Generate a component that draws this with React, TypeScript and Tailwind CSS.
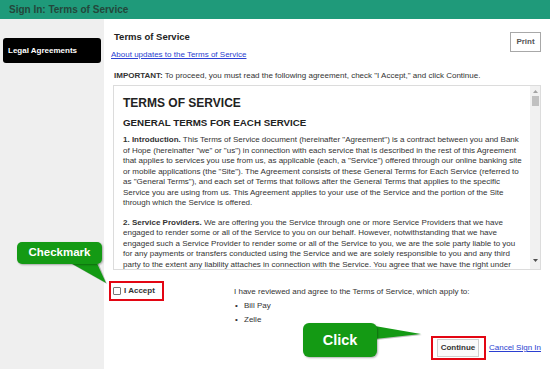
import React from "react";

export default function App() {
  return (
    <div className="relative w-[550px] h-[369px] overflow-hidden bg-white flex flex-col font-['Liberation_Sans',Arial,sans-serif] text-[#333]">
      {/* Header */}
      <div className="h-[19px] shrink-0 bg-[#1f9a7a] flex items-center pl-[9px]">
        <span className="text-[10px] font-bold text-[#23473b] leading-none">Sign In: Terms of Service</span>
      </div>

      <div className="flex flex-1">
        {/* Sidebar */}
        <aside className="w-[104px] shrink-0 bg-[#efefef] pt-[19px] pl-[3px]">
          <div className="w-[98px] h-[25px] bg-black rounded-[3px] flex items-center pl-[5px]">
            <span className="text-white text-[8px] font-bold">Legal Agreements</span>
          </div>
        </aside>

        {/* Main */}
        <main className="flex-1 flex flex-col pl-[5px] pr-[9px] pt-[13px]">
          <div className="flex items-start justify-between">
            <div className="flex flex-col">
              <h1 className="ml-[5px] text-[9.5px] leading-[10px] font-bold text-[#222]">Terms of Service</h1>
              <a className="ml-[2px] mt-[8px] text-[8px] leading-[10px] text-[#2b3fd1] underline">About updates to the Terms of Service</a>
            </div>
            <div className="w-[31px] h-[20px] border border-[#a8a8a8] flex items-center justify-center">
              <span className="text-[8px] font-bold text-[#555]">Print</span>
            </div>
          </div>

          <p className="ml-[5px] mt-[11px] text-[8px] leading-[10px] text-[#333]">
            <b>IMPORTANT:</b> To proceed, you must read the following agreement, check "I Accept," and click Continue.
          </p>

          {/* Scroll box */}
          <div className="ml-[4px] mt-[4px] h-[185px] border border-[#dcdcdc] flex overflow-hidden">
            <div className="flex-1 pl-[9px] pr-[6px] pt-[10px] overflow-hidden">
              <div className="text-[12px] leading-[14px] font-bold text-[#222]">TERMS OF SERVICE</div>
              <div className="mt-[7px] text-[9.75px] leading-[12px] font-bold text-[#222]">GENERAL TERMS FOR EACH SERVICE</div>
              <p className="mt-[6px] text-[8px] leading-[10.5px] text-[#333]">
                <b>1. Introduction.</b> This Terms of Service document (hereinafter "Agreement") is a contract between you and Bank of Hope (hereinafter "we" or "us") in connection with each service that is described in the rest of this Agreement that applies to services you use from us, as applicable (each, a "Service") offered through our online banking site or mobile applications (the "Site"). The Agreement consists of these General Terms for Each Service (referred to as "General Terms"), and each set of Terms that follows after the General Terms that applies to the specific Service you are using from us. This Agreement applies to your use of the Service and the portion of the Site through which the Service is offered.
              </p>
              <p className="mt-[9px] text-[8px] leading-[10.5px] text-[#333]">
                <b>2. Service Providers.</b> We are offering you the Service through one or more Service Providers that we have engaged to render some or all of the Service to you on our behalf. However, notwithstanding that we have engaged such a Service Provider to render some or all of the Service to you, we are the sole party liable to you for any payments or transfers conducted using the Service and we are solely responsible to you and any third party to the extent any liability attaches in connection with the Service. You agree that we have the right under this Agreement to delegate to Service Providers all of the rights and performance obligations that we have under this Agreement.
              </p>
            </div>
            {/* Scrollbar */}
            <div className="w-[10px] bg-[#f1f1f1] flex flex-col items-center justify-between py-[3px]">
              <div className="flex flex-col items-center">
                <svg width="5" height="3" viewBox="0 0 5 3" className="mt-[1px]"><polygon points="2.5,0 5,3 0,3" fill="#a3a3a3" /></svg>
                <div className="mt-[3px] w-[7px] h-[10px] bg-[#c1c1c1]" />
              </div>
              <svg width="5" height="3" viewBox="0 0 5 3" className="mb-[4px]"><polygon points="0,0 5,0 2.5,3" fill="#505050" /></svg>
            </div>
          </div>

          {/* Accept row */}
          <div className="flex items-start mt-[11px]">
            <div className="w-[55px] h-[20px] border-2 border-[#e30613] flex items-center pl-[2px]">
              <span className="w-[8px] h-[8px] border border-[#777] rounded-[1px] bg-white" />
              <span className="ml-[3px] text-[8px] font-bold text-[#333]">I Accept</span>
            </div>
            <div className="ml-[70px] mt-[6px] flex flex-col text-[8px] leading-[10px] text-[#333]">
              <span>I have reviewed and agree to the Terms of Service, which apply to:</span>
              <ul className="mt-[4px] flex flex-col gap-[4px]">
                <li className="flex items-center"><span className="w-[8px] ml-[1px]">•</span><span className="ml-[1px]">Bill Pay</span></li>
                <li className="flex items-center"><span className="w-[8px] ml-[1px]">•</span><span className="ml-[1px]">Zelle</span></li>
              </ul>
            </div>
          </div>

          {/* Continue row */}
          <div className="flex items-center justify-end mt-[11px]">
            <div className="w-[55px] h-[24px] border-2 border-[#e30613] flex items-center pl-[4px]">
              <div className="w-[42px] h-[18px] border border-[#cfcfcf] bg-[#fafafa] flex items-center justify-center">
                <span className="text-[8px] font-bold text-[#333]">Continue</span>
              </div>
            </div>
            <a className="ml-[3px] text-[8px] text-[#2b3fd1] underline">Cancel Sign In</a>
          </div>
        </main>
      </div>

      {/* Checkmark callout */}
      <svg className="absolute left-[60px] top-[258px]" width="52" height="30" viewBox="0 0 52 30">
        <polygon points="8,4 38,4 47,26" fill="#bdbdbd" />
        <polygon points="7,3 36,3 46,25" fill="#149a14" />
      </svg>
      <div className="absolute left-[17px] top-[242px] w-[85px] h-[22px] rounded-[5px] bg-[#149a14] shadow-[1px_1px_2px_rgba(0,0,0,0.3)] flex items-center justify-center">
        <span className="text-white text-[11.5px] font-bold leading-none">Checkmark</span>
      </div>

      {/* Click callout */}
      <svg className="absolute left-[362px] top-[322px]" width="64" height="22" viewBox="0 0 64 22">
        <polygon points="8,4 60,13 14,18" fill="#c4c4c4" />
        <polygon points="7,3 59,12 13,17" fill="#149a14" />
      </svg>
      <div className="absolute left-[303px] top-[323px] w-[74px] h-[34px] rounded-[6px] bg-[#149a14] shadow-[1px_1px_2px_rgba(0,0,0,0.3)] flex items-center justify-center">
        <span className="text-white text-[14.5px] font-bold leading-none">Click</span>
      </div>
    </div>
  );
}
